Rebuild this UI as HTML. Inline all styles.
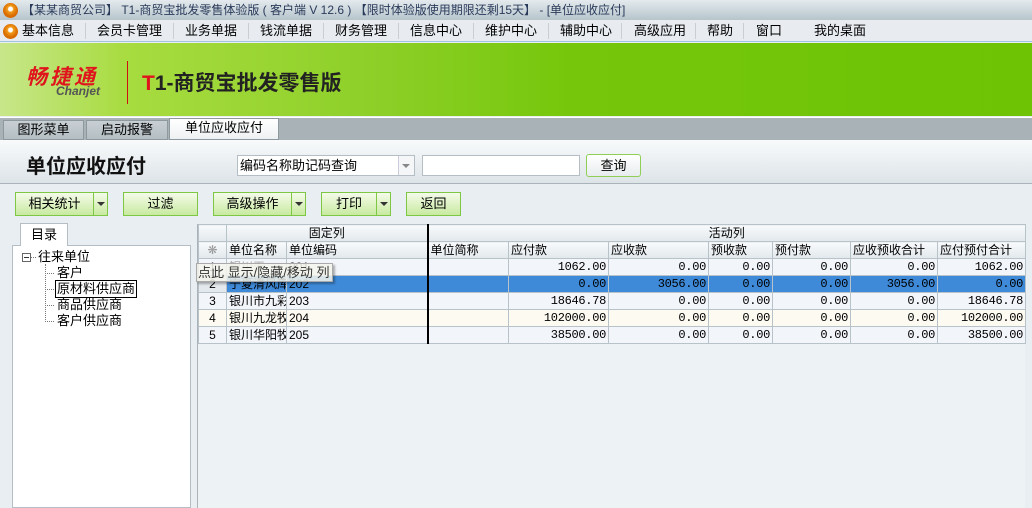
<!DOCTYPE html>
<html><head><meta charset="utf-8">
<style>
*{margin:0;padding:0;box-sizing:border-box}
body{width:1032px;height:508px;overflow:hidden;position:relative;background:#e9eef2;font-family:"Liberation Sans","Noto Sans CJK SC","WenQuanYi Zen Hei",sans-serif;font-size:12px;color:#000}
.a{position:absolute;white-space:nowrap}
.title{left:0;top:0;width:1032px;height:20px;background:linear-gradient(#e4eaee,#b6c5cc);color:#2a3a5a;font-size:12px;line-height:20px;padding-left:22px}
.menu{left:0;top:20px;width:1032px;height:22px;background:#e8ecf1;border-bottom:1px solid #9fc3e0;font-size:13px;line-height:22px}
.menu span{position:absolute;top:0}
.sep{position:absolute;top:3px;width:1px;height:16px;background:#c8ced4}
.logo{width:15px;height:15px;border-radius:50%;background:radial-gradient(circle at 50% 40%,#fff 0 2px,#f39a1a 3px,#d86b00 7px);}
.banner{left:0;top:43px;width:1032px;height:73px;background:linear-gradient(90deg,#c8e68a 0,#a8dc40 12%,#8fd02a 35%,#76c70c 55%,#6dc304 100%)}
.tabs{left:0;top:117px;width:1032px;height:23px;background:#a8b2b7;border-top:1px solid #fff}
.tab{position:absolute;top:2px;height:20px;background:linear-gradient(#c8d0d4,#b4bec3);border:1px solid #8e999f;font-size:13px;line-height:18px;text-align:center}
.hdr{left:0;top:140px;width:1032px;height:44px;background:linear-gradient(#f8fafb,#dde4e8);border-bottom:1px solid #a9b3b9}
.btn{position:absolute;top:192px;height:24px;border:1px solid #7dc745;background:linear-gradient(#f4fbe9,#c8eaa0);font-size:13px;line-height:22px;text-align:center}
.dd{position:absolute;top:0;right:0;width:14px;height:22px;border-left:1px solid #7dc745}
.dd:after{content:"";position:absolute;left:3px;top:9px;border:4px solid transparent;border-top:4px solid #333}
.grid{left:197px;top:224px;width:828px;height:284px;background:#edf2f5;border-left:1px solid #a9b3b9}
table{border-collapse:collapse;table-layout:fixed;font-size:12px}
td{border:1px solid #b8c2c9;height:17px;line-height:16px;overflow:hidden;white-space:nowrap;padding:0 2px}
.h td{background:linear-gradient(#f8fafc,#e2e8ec);}
.num{text-align:right;font-family:"Liberation Mono",monospace;font-size:12px;letter-spacing:-0.3px}
.rh{text-align:center;background:linear-gradient(#f4f6f8,#dde3e7)}
.thick{border-right:2px solid #000}
.r td{background:#f2f5fa}
.sel td{background:#3f8ad8}
.cr td{background:#fcfaf1}
.tree div{line-height:16px}
</style></head><body>
<div class="a title">【某某商贸公司】 T1-商贸宝批发零售体验版 ( 客户端 V 12.6 ) 【限时体验版使用期限还剩15天】 - [单位应收应付]</div>
<div class="a logo" style="left:3px;top:3px"></div>
<div class="a menu">
<div class="logo" style="position:absolute;left:3px;top:4px"></div>
<span style="left:22px">基本信息</span><div class="sep" style="left:85px"></div>
<span style="left:97px">会员卡管理</span><div class="sep" style="left:173px"></div>
<span style="left:185px">业务单据</span><div class="sep" style="left:248px"></div>
<span style="left:260px">钱流单据</span><div class="sep" style="left:323px"></div>
<span style="left:335px">财务管理</span><div class="sep" style="left:398px"></div>
<span style="left:410px">信息中心</span><div class="sep" style="left:473px"></div>
<span style="left:485px">维护中心</span><div class="sep" style="left:548px"></div>
<span style="left:560px">辅助中心</span><div class="sep" style="left:621px"></div>
<span style="left:634px">高级应用</span><div class="sep" style="left:695px"></div>
<span style="left:707px">帮助</span><div class="sep" style="left:743px"></div>
<span style="left:756px">窗口</span>
<span style="left:814px">我的桌面</span>
</div>
<div class="a banner">
<div class="a" style="left:26px;top:18px;color:#e0141c;font-size:21px;font-weight:bold;font-style:italic;letter-spacing:3px">畅捷通</div>
<div class="a" style="left:56px;top:41px;color:#555;font-size:12px;font-weight:bold;font-style:italic">Chanjet</div>
<div class="a" style="left:127px;top:18px;width:1px;height:43px;background:#d01010"></div>
<div class="a" style="left:142px;top:24px;font-size:21px;font-weight:bold;color:#222"><span style="color:#e0141c">T</span>1-商贸宝批发零售版</div>
</div>
<div class="a tabs">
<div class="tab" style="left:3px;width:81px">图形菜单</div>
<div class="tab" style="left:86px;width:82px">启动报警</div>
<div class="tab" style="left:169px;width:110px;background:linear-gradient(#fff,#eef1f3);top:0;height:22px">单位应收应付</div>
</div>
<div class="a hdr">
<div class="a" style="left:26px;top:10px;font-size:20px;font-weight:bold;color:#111">单位应收应付</div>
<div class="a" style="left:237px;top:15px;width:178px;height:21px;background:#fff;border:1px solid #b5bec4;font-size:13px;line-height:19px;padding-left:2px">编码名称助记码查询<div class="a" style="right:0;top:0;width:16px;height:19px;border-left:1px solid #ccd;background:#f4f6f8"></div><div class="a" style="right:4px;top:8px;border:4px solid transparent;border-top:4px solid #888"></div></div>
<div class="a" style="left:422px;top:15px;width:158px;height:21px;background:#fff;border:1px solid #b5bec4"></div>
<div class="a" style="left:586px;top:14px;width:55px;height:23px;border:1px solid #8fcf55;border-radius:3px;background:linear-gradient(#fff,#e8ecee);font-size:13px;line-height:21px;text-align:center">查询</div>
</div>
<div class="btn" style="left:15px;width:93px;padding-right:14px">相关统计<div class="dd"></div></div>
<div class="btn" style="left:123px;width:75px">过滤</div>
<div class="btn" style="left:213px;width:93px;padding-right:14px">高级操作<div class="dd"></div></div>
<div class="btn" style="left:321px;width:70px;padding-right:14px">打印<div class="dd"></div></div>
<div class="btn" style="left:406px;width:55px">返回</div>

<div class="a" style="left:20px;top:223px;width:48px;height:23px;background:#fff;border:1px solid #b5bec4;border-bottom:none;font-size:13px;line-height:21px;text-align:center;z-index:2">目录</div>
<div class="a tree" style="left:12px;top:245px;width:179px;height:263px;background:#fff;border:1px solid #b5bec4;font-size:13px">
<div class="a" style="left:9px;top:7px;width:9px;height:9px;border:1px solid #666;background:#fff"><div class="a" style="left:1px;top:3px;width:5px;height:1px;background:#333"></div></div>
<div class="a" style="left:18px;top:11px;width:5px;border-top:1px dotted #777"></div>
<div class="a" style="left:25px;top:3px">往来单位</div>
<div class="a" style="left:32px;top:18px;width:1px;height:58px;border-left:1px dotted #777"></div>
<div class="a" style="left:32px;top:27px;width:9px;border-top:1px dotted #777"></div>
<div class="a" style="left:32px;top:43px;width:9px;border-top:1px dotted #777"></div>
<div class="a" style="left:32px;top:59px;width:9px;border-top:1px dotted #777"></div>
<div class="a" style="left:32px;top:75px;width:9px;border-top:1px dotted #777"></div>
<div class="a" style="left:44px;top:19px">客户</div>
<div class="a" style="left:42px;top:34px;border:1px solid #000;padding:0 1px;line-height:16px">原材料供应商</div>
<div class="a" style="left:44px;top:51px">商品供应商</div>
<div class="a" style="left:44px;top:67px">客户供应商</div>
</div>

<div class="a grid">
<table style="width:827px">
<colgroup><col style="width:28px"><col style="width:60px"><col style="width:141px"><col style="width:81px"><col style="width:100px"><col style="width:100px"><col style="width:64px"><col style="width:78px"><col style="width:87px"><col style="width:88px"></colgroup>
<tr class="h"><td></td><td colspan="2" class="thick" style="text-align:center">固定列</td><td colspan="7" style="text-align:center">活动列</td></tr>
<tr class="h"><td style="text-align:center;color:#999">❋</td><td>单位名称</td><td class="thick">单位编码</td><td>单位简称</td><td>应付款</td><td>应收款</td><td>预收款</td><td>预付款</td><td>应收预收合计</td><td>应付预付合计</td></tr>
<tr class="r"><td class="rh">1</td><td style="color:#aaa">银川天</td><td class="thick">201</td><td></td><td class="num">1062.00</td><td class="num">0.00</td><td class="num">0.00</td><td class="num">0.00</td><td class="num">0.00</td><td class="num">1062.00</td></tr>
<tr class="sel"><td class="rh" style="background:#e4e9ed">2</td><td>宁夏清风库</td><td class="thick">202</td><td></td><td class="num">0.00</td><td class="num">3056.00</td><td class="num">0.00</td><td class="num">0.00</td><td class="num">3056.00</td><td class="num">0.00</td></tr>
<tr class="r"><td class="rh">3</td><td>银川市九彩</td><td class="thick">203</td><td></td><td class="num">18646.78</td><td class="num">0.00</td><td class="num">0.00</td><td class="num">0.00</td><td class="num">0.00</td><td class="num">18646.78</td></tr>
<tr class="cr"><td class="rh">4</td><td>银川九龙牧</td><td class="thick">204</td><td></td><td class="num">102000.00</td><td class="num">0.00</td><td class="num">0.00</td><td class="num">0.00</td><td class="num">0.00</td><td class="num">102000.00</td></tr>
<tr class="r"><td class="rh">5</td><td>银川华阳牧</td><td class="thick">205</td><td></td><td class="num">38500.00</td><td class="num">0.00</td><td class="num">0.00</td><td class="num">0.00</td><td class="num">0.00</td><td class="num">38500.00</td></tr>
</table>
</div>
<div class="a" style="left:196px;top:263px;width:137px;height:19px;background:rgba(245,245,235,0.85);border:1px solid #aaa;box-shadow:2px 2px 2px rgba(0,0,0,.3);font-size:13px;line-height:17px;padding-left:1px;color:#333">点此 显示/隐藏/移动 列</div>
</body></html>
